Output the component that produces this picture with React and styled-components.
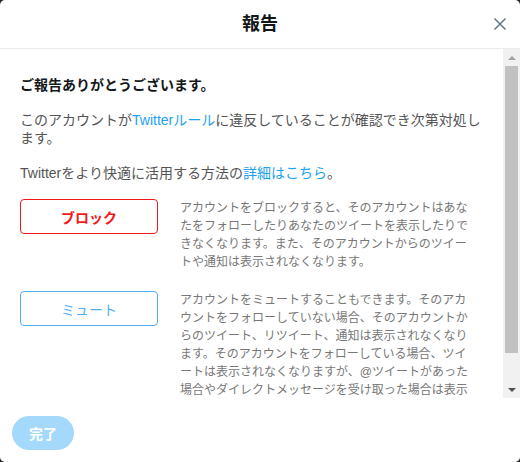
import React from 'react'
import styled, { createGlobalStyle } from 'styled-components'

const GlobalStyle = createGlobalStyle`
  html, body {
    margin: 0;
    padding: 0;
    background: #222;
  }
  body {
    font-family: "Liberation Sans", "Noto Sans CJK JP", sans-serif;
  }
`

const Modal = styled.div`
  width: 520px;
  height: 462px;
  background: #fff;
  border-radius: 5px;
  overflow: hidden;
  display: flex;
  flex-direction: column;
`

const Header = styled.div`
  height: 48px;
  border-bottom: 1px solid #e6ecf0;
  display: flex;
  align-items: center;
  justify-content: center;
  position: relative;
  flex-shrink: 0;
`

const Title = styled.h2`
  margin: 0;
  font-size: 18px;
  font-weight: 700;
  color: #14171a;
  line-height: 24px;
`

const Close = styled.button`
  position: absolute;
  right: 11px;
  top: 15px;
  width: 18px;
  height: 18px;
  padding: 0;
  border: 0;
  background: none;
  display: flex;
  align-items: center;
  justify-content: center;
  cursor: pointer;
`

const Middle = styled.div`
  display: flex;
  height: 349px;
  flex-shrink: 0;
`

const Content = styled.div`
  flex: 1;
  overflow: hidden;
  padding: 27px 12px 0 20px;
`

const Lead = styled.p`
  margin: 0 0 17px;
  font-size: 14px;
  line-height: 18px;
  font-weight: 700;
  color: #14171a;
`

const Text = styled.p`
  margin: 0 0 17px;
  font-size: 14px;
  line-height: 18px;
  color: #555;
`

const Link = styled.a`
  color: #1da1f2;
  text-decoration: none;
`

const Options = styled.div`
  margin-top: 15px;
  display: flex;
  flex-direction: column;
  gap: 20px;
`

const Option = styled.div`
  display: flex;
  align-items: flex-start;
  gap: 22px;
`

const OptionButton = styled.button`
  width: 138px;
  height: 35px;
  flex-shrink: 0;
  background: #fff;
  border: 1px solid ${p => p.color};
  border-radius: 4px;
  color: ${p => p.color};
  font-family: inherit;
  font-size: 14px;
  font-weight: ${p => (p.bold ? 700 : 400)};
  cursor: pointer;
`

const OptionText = styled.p`
  margin: 0;
  width: 292px;
  font-size: 12px;
  line-height: 18px;
  color: #777;
`

const Scrollbar = styled.div`
  width: 17px;
  background: #f1f1f1;
  display: flex;
  flex-direction: column;
  flex-shrink: 0;
`

const Arrow = styled.div`
  height: 17px;
  display: flex;
  align-items: center;
  justify-content: center;
  &::after {
    content: '';
    border-left: 4px solid transparent;
    border-right: 4px solid transparent;
    ${p => (p.up ? 'border-bottom: 4px solid #a3a3a3;' : 'border-top: 4px solid #505050;')}
  }
`

const Track = styled.div`
  flex: 1;
  padding: 0 2px;
`

const Thumb = styled.div`
  height: 287px;
  background: #c1c1c1;
`

const Footer = styled.div`
  flex: 1;
  padding: 18px 12px 0;
`

const Done = styled.button`
  width: 62px;
  height: 34px;
  border: 0;
  border-radius: 17px;
  background: #a5d9fb;
  color: #fff;
  font-family: inherit;
  font-size: 14px;
  font-weight: 700;
`

const App = () => {
  return (
    <>
      <GlobalStyle />
      <Modal>
        <Header>
          <Title>報告</Title>
          <Close aria-label="閉じる">
            <svg width="14" height="14" viewBox="0 0 14 14">
              <path d="M1.5 1.5 L12.5 12.5 M12.5 1.5 L1.5 12.5" stroke="#657786" strokeWidth="1.5" fill="none" />
            </svg>
          </Close>
        </Header>
        <Middle>
          <Content>
            <Lead>ご報告ありがとうございます。</Lead>
            <Text>
              このアカウントが<Link href="#">Twitterルール</Link>に違反していることが確認でき次第対処します。
            </Text>
            <Text>
              Twitterをより快適に活用する方法の<Link href="#">詳細はこちら</Link>。
            </Text>
            <Options>
              <Option>
                <OptionButton color="#f01a1a" bold>ブロック</OptionButton>
                <OptionText>
                  アカウントをブロックすると、そのアカウントはあなたをフォローしたりあなたのツイートを表示したりできなくなります。また、そのアカウントからのツイートや通知は表示されなくなります。
                </OptionText>
              </Option>
              <Option>
                <OptionButton color="#55acee">ミュート</OptionButton>
                <OptionText>
                  アカウントをミュートすることもできます。そのアカウントをフォローしていない場合、そのアカウントからのツイート、リツイート、通知は表示されなくなります。そのアカウントをフォローしている場合、ツイートは表示されなくなりますが、@ツイートがあった場合やダイレクトメッセージを受け取った場合は表示されます。
                </OptionText>
              </Option>
            </Options>
          </Content>
          <Scrollbar>
            <Arrow up />
            <Track>
              <Thumb />
            </Track>
            <Arrow />
          </Scrollbar>
        </Middle>
        <Footer>
          <Done>完了</Done>
        </Footer>
      </Modal>
    </>
  )
}

export default App
